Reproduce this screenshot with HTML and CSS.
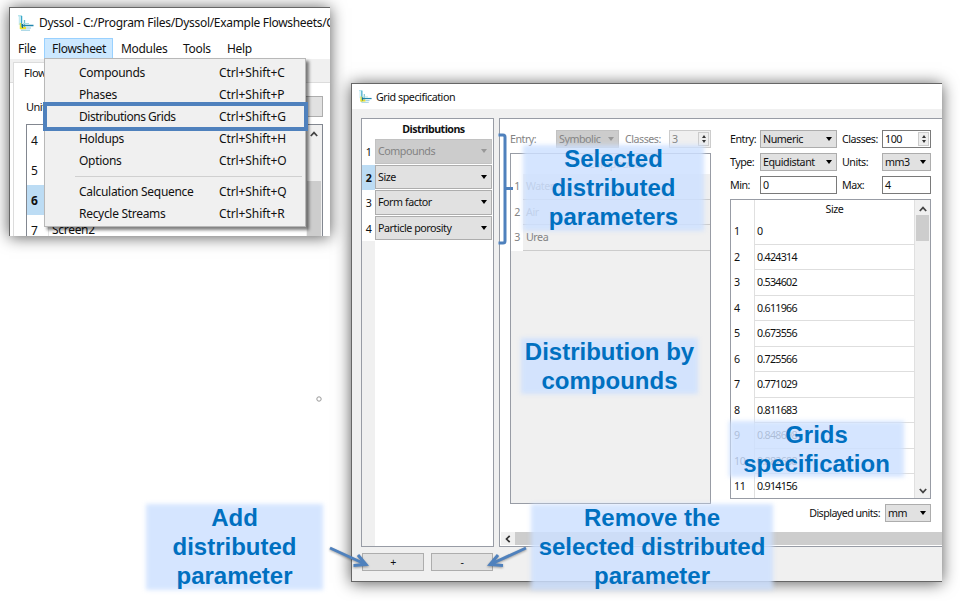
FILE: index.html
```html
<!DOCTYPE html>
<html lang="en">
<head>
<meta charset="utf-8">
<title>Dyssol - Grid specification</title>
<link rel="stylesheet" href="styles.css">
</head>
<body>
<svg width="0" height="0" class="defs">
  <symbol id="logo" viewBox="0 0 16 16">
    <path d="M0 .8h4" stroke="#9adbe6" stroke-width="1"/>
    <path d="M1.300 1v9" stroke="#b5e4ee" stroke-width="1"/>
    <path d="M3.500 1v13" stroke="#3aa9c9" stroke-width="1.500"/>
    <path d="M6.500 5v7" stroke="#6fbfcd" stroke-width="1.300"/>
    <path d="M2.500 8v6" stroke="#e6e23a" stroke-width="1.500"/>
    <path d="M2 13h6" stroke="#efe12a" stroke-width="2.400"/>
    <path d="M4 10.500h11.500" stroke="#2186ad" stroke-width="1.500"/>
    <path d="M5 8.500h6" stroke="#a6dce4" stroke-width="1"/>
    <path d="M8 13h5M3 15.200h9" stroke="#8cc9dc" stroke-width="1"/>
    <path d="M4.500 9v4" stroke="#176b86" stroke-width="1.200"/>
  </symbol>
  <symbol id="up" viewBox="0 0 8 6"><path d="M.8 5 4 1.600 7.200 5" fill="none" stroke="#444" stroke-width="1.700"/></symbol>
  <symbol id="down" viewBox="0 0 8 6"><path d="M.8 1 4 4.400 7.200 1" fill="none" stroke="#444" stroke-width="1.700"/></symbol>
</svg>
<main class="canvas">
  <section class="window app">
    <header class="app-title"><svg class="logo"><use href="#logo"/></svg><span>Dyssol - C:/Program Files/Dyssol/Example Flowsheets/C</span></header>
    <nav class="menubar"><span class="m1">File</span><span class="m2">Flowsheet</span><span class="m3">Modules</span><span class="m4">Tools</span><span class="m5">Help</span></nav>
    <div class="tabs"><div class="tab">Flow</div></div>
    <div class="pane">
      <div class="unit-row"><span>Unit</span><div class="unit-btn"></div></div>
      <div class="units">
        <div class="nums"><span>4</span><span>5</span><span class="on">6</span><span>7</span></div>
        <div class="names"><span>Screen2</span></div>
        <div class="vbar"><svg><use href="#up"/></svg><div class="thumb"></div></div>
      </div>
    </div>
  </section>

  <div class="menu">
    <div class="item"><span>Compounds</span><span>Ctrl+Shift+C</span></div>
    <div class="item"><span>Phases</span><span>Ctrl+Shift+P</span></div>
    <div class="item"><span class="tight">Distributions Grids</span><span>Ctrl+Shift+G</span></div>
    <div class="item"><span>Holdups</span><span>Ctrl+Shift+H</span></div>
    <div class="item"><span>Options</span><span>Ctrl+Shift+O</span></div>
    <div class="sep"></div>
    <div class="item"><span>Calculation Sequence</span><span>Ctrl+Shift+Q</span></div>
    <div class="item"><span>Recycle Streams</span><span>Ctrl+Shift+R</span></div>
  </div>
  <div class="marker"></div>

  <section class="window dialog">
    <header class="dlg-title"><svg class="logo"><use href="#logo"/></svg><span>Grid specification</span></header>
    <div class="dlg-body">
      <div class="left">
        <div class="dist">
          <div class="dist-head">Distributions</div>
          <div class="dist-row"><b class="n">1</b><div class="combo off">Compounds</div></div>
          <div class="dist-row sel"><b class="n">2</b><div class="combo">Size</div></div>
          <div class="dist-row"><b class="n">3</b><div class="combo">Form factor</div></div>
          <div class="dist-row"><b class="n">4</b><div class="combo">Particle porosity</div></div>
          <div class="dist-rest"></div>
        </div>
        <div class="btns"><div class="btn">+</div><div class="btn">-</div></div>
      </div>
      <div class="right">
        <div class="grids">
          <div class="comp">
            <div class="form disabled"><span>Entry:</span><div class="combo off">Symbolic</div><span>Classes:</span><div class="spin">3<i></i></div></div>
            <div class="ctable">
              <div class="chead">Compounds</div>
              <div class="crow"><span>1</span><span>Water</span></div>
              <div class="crow"><span>2</span><span>Air</span></div>
              <div class="crow"><span>3</span><span>Urea</span></div>
            </div>
          </div>
          <div class="num">
            <div class="form"><span>Entry:</span><div class="combo">Numeric</div><span>Classes:</span><div class="spin">100<i></i></div>
              <span>Type:</span><div class="combo">Equidistant</div><span>Units:</span><div class="combo">mm3</div>
              <span>Min:</span><div class="spin">0</div><span>Max:</span><div class="spin">4</div></div>
            <div class="stable">
              <div class="srows">
                <div class="shead"><span></span><span>Size</span></div>
                <div class="srow"><span>1</span><span>0</span></div>
                <div class="srow"><span>2</span><span>0.424314</span></div>
                <div class="srow"><span>3</span><span>0.534602</span></div>
                <div class="srow"><span>4</span><span>0.611966</span></div>
                <div class="srow"><span>5</span><span>0.673556</span></div>
                <div class="srow"><span>6</span><span>0.725566</span></div>
                <div class="srow"><span>7</span><span>0.771029</span></div>
                <div class="srow"><span>8</span><span>0.811683</span></div>
                <div class="srow"><span>9</span><span>0.848698</span></div>
                <div class="srow"><span>10</span><span>0.882688</span></div>
                <div class="srow"><span>11</span><span>0.914156</span></div>
              </div>
              <div class="sbar"><svg><use href="#up"/></svg><div class="thumb"></div><svg class="dn"><use href="#down"/></svg></div>
            </div>
            <div class="disp"><span>Displayed units:</span><div class="combo">mm</div></div>
          </div>
        </div>
        <div class="hbar"><div class="arr"><svg viewBox="0 0 6 8"><path d="M4.700.8 1.500 4l3.200 3.200" fill="none" stroke="#333" stroke-width="1.700"/></svg></div><div class="hthumb"></div></div>
      </div>
    </div>
  </section>

  <div class="note selected">Selected<br>distributed<br>parameters</div>
  <div class="note bycomp">Distribution by<br>compounds</div>
  <div class="note spec">Grids<br>specification</div>
  <div class="note add">Add<br>distributed<br>parameter</div>
  <div class="note remove">Remove the<br>selected distributed<br>parameter</div>
  <svg class="overlay" viewBox="0 0 960 601" fill="none" stroke="#4f81bd" stroke-width="3">
    <path d="M498.500 135h4.500q2 0 2 2v104q0 2-2 2h-4.500M505 188.500h8"/>
    <g class="arrows"><path d="M330 548l35 16M353.500 565.500l12.500-1-8-9.500M526 548l-35 16M503 565.500l-13-1 8-9.500"/></g>
    <circle cx="319" cy="399" r="2.200" stroke="#999" stroke-width="1"/>
  </svg>
</main>
</body>
</html>
```

FILE: styles.css
```css
* { box-sizing: border-box; }
body { margin: 0; background: #fff; overflow: hidden; }
.defs { position: absolute; }
.canvas { position: relative; width: 960px; height: 601px; overflow: hidden; font: 12px/16px "Noto Sans", sans-serif; color: #111; white-space: nowrap; }
.window { position: absolute; box-shadow: 0 1px 15px rgba(0,0,0,.65); border: 1px solid #666; border-right: 0; }
.app { left: 9px; top: 7px; width: 321px; height: 229px; background: #fff; overflow: hidden; border-bottom: 0; letter-spacing: -.3px; }
.logo { width: 16px; height: 16px; flex: none; }
.app-title { height: 30px; display: flex; align-items: center; padding-left: 8px; gap: 5px; letter-spacing: -.31px; }
.menubar { display: flex; height: 21px; line-height: 22px; padding-left: 8px; }
.menubar .m1 { width: 26px; }
.menubar .m2 { width: 69px; padding-left: 7px; border: 1px solid #99d1ff; background: #cce8ff; line-height: 20px; }
.menubar .m3 { width: 70px; padding-left: 8px; }
.menubar .m4 { width: 44px; }
.tabs { height: 24px; background: #f0f0f0; border-bottom: 1px solid #dcdcdc; padding: 3px 0 0 3px; }
.tab { width: 60px; height: 21px; background: #fff; border: 1px solid #dcdcdc; border-bottom: 0; padding-left: 10px; font-size: 11px; line-height: 20px; }
.pane { margin-left: 3px; border-left: 1px solid #dcdcdc; padding: 13px 7px 0 12px; height: 160px; }
.unit-row { display: flex; justify-content: space-between; height: 28px; font-size: 11px; line-height: 21px; letter-spacing: -.5px; }
.unit-btn { width: 60px; height: 21px; background: #e1e1e1; border: 1px solid #adadad; }
.units { display: flex; height: 130px; border: 1px solid #828790; }
.nums { width: 22px; border-right: 1px solid #e5e5e5; display: flex; flex-direction: column; }
.nums span { height: 30px; line-height: 31px; padding-left: 4px; }
.nums .on { background: #bcdcf4; font-weight: bold; }
.names { flex: 1; padding: 90px 0 0 3px; line-height: 30px; }
.vbar { width: 16px; background: #f0f0f0; display: flex; flex-direction: column; align-items: center; }
.vbar svg, .sbar svg { width: 8px; height: 6px; margin-top: 6px; flex: none; }
.vbar .thumb { width: 14px; height: 100px; margin-top: 44px; background: #cdcdcd; }

.menu { position: absolute; left: 44px; top: 58px; width: 262px; height: 169px; background: #f0f0f0; border: 1px solid #b8b8b8; padding: 3px 0; box-shadow: 3px 3px 3px rgba(0,0,0,.5); letter-spacing: -.3px; }
.item { display: grid; grid-template-columns: 140px 1fr; height: 22px; line-height: 22px; padding-left: 34px; }
.item span + span { letter-spacing: -.1px; }
.item .tight { letter-spacing: -.48px; }
.sep { height: 1px; margin: 4px 3px 4px 30px; background: #d0d0d0; }
.marker { position: absolute; left: 43px; top: 102px; width: 265px; height: 29px; border: 4px solid #4f81bd; }

.dialog { left: 351px; top: 83px; width: 591px; height: 499px; background: #f0f0f0; font-size: 10.700px; letter-spacing: -.45px; }
.dlg-title { height: 25px; background: #fff; display: flex; align-items: center; gap: 4px; padding-left: 7px; letter-spacing: -.45px; }
.dlg-title .logo { width: 13px; height: 13px; }
.dlg-body { display: flex; gap: 5px; padding: 9px 0 0 9px; }
.left { width: 133px; }
.dist { height: 429px; border: 1px solid #989ca5; background: #fff; display: flex; flex-direction: column; }
.dist-head { height: 20px; line-height: 20px; font-weight: bold; text-align: center; padding-left: 12px; letter-spacing: -.55px; }
.dist-row { display: flex; height: 25.500px; flex: none; }
.n { width: 13px; line-height: 26px; text-align: center; font-weight: normal; }
.sel .n { background: #bcdcf4; font-weight: bold; }
.combo { border: 1px solid #adadad; background: #e1e1e1; padding-left: 2px; display: flex; align-items: center; position: relative; }
.combo::after { content: ""; margin-left: auto; margin-right: 4px; border: 3.500px solid transparent; border-top: 4px solid #000; border-bottom: 0; }
.combo.off { background: #ccc; border-color: #c2c2c2; color: #838383; }
.combo.off::after { border-top-color: #989898; }
.dist-row .combo { width: 117px; height: 24.500px; }
.dist-rest { width: 13px; flex: 1; background: #f0f0f0; }
.btns { display: flex; gap: 7px; margin-top: 6px; padding-left: 1px; }
.btn { width: 62px; height: 18px; border: 1px solid #adadad; background: #e1e1e1; text-align: center; line-height: 17px; }
.right { width: 443px; height: 429px; border: 1px solid #989ca5; border-right: 0; background: #fff; }
.grids { height: 413px; padding: 11px 0 0 10px; display: flex; gap: 19px; }
.form { display: grid; grid-template-columns: 30px 77px 40px 49px; column-gap: 0; row-gap: 5px; grid-auto-rows: 18px; line-height: 18px; }
.num .form { grid-template-columns: 30px 77px 45px 49px; }
.num .form span:nth-of-type(even) { padding-left: 5px; }
.form.disabled { grid-template-columns: 46px 63px 50px 42px; color: #838383; }
.form.disabled span:nth-of-type(2) { padding-left: 6px; }
.spin { border: 1px solid #7a7a7a; background: #fff; padding-left: 2px; line-height: 16px; display: flex; justify-content: space-between; }
.disabled .spin { border-color: #ccc; background: #f0f0f0; }
.spin i { width: 11px; margin: 1px; background: #eee; border: 1px solid #ccc; display: flex; flex-direction: column; align-items: center; justify-content: space-between; padding: 2px 0; }
.spin i::before, .spin i::after { content: ""; border: 2.500px solid transparent; }
.spin i::before { border-bottom: 3px solid #333; border-top: 0; }
.spin i::after { border-top: 3px solid #333; border-bottom: 0; }
.comp, .num { width: 201px; }
.form > span { letter-spacing: -.5px; }
.ctable { height: 351px; margin-top: 5px; border: 1px solid #989ca5; background: #f0f0f0; color: #838383; }
.chead { height: 20px; line-height: 20px; background: #fff; text-align: center; padding-left: 12px; }
.crow { display: flex; height: 25.500px; line-height: 25px; }
.crow span:first-child { width: 12px; background: #fff; text-align: center; }
.crow span:last-child { flex: 1; padding-left: 3px; border-bottom: 1px solid #ccc; }
.stable { height: 300px; margin-top: 5px; border: 1px solid #989ca5; display: flex; overflow: hidden; }
.srows { flex: 1; }
.shead, .srow { display: grid; grid-template-columns: 23px 1fr; height: 25.500px; line-height: 25px; }
.shead { height: 19px; line-height: 19px; text-align: center; }
.shead span + span, .srow span + span { border-left: 1px solid #e0e0e0; border-right: 1px solid #e0e0e0; }
.srow span + span { border-bottom: 1px solid #dedede; padding-left: 2px; line-height: 24px; letter-spacing: -.73px; }
.srow span:first-child { padding-left: 3px; }
.sbar { width: 15px; background: #f0f0f0; display: flex; flex-direction: column; align-items: center; }
.sbar .thumb { width: 13px; height: 26px; margin-top: 3px; background: #cdcdcd; }
.sbar .dn { margin: auto 0 4px; }
.disp { display: flex; justify-content: flex-end; gap: 5px; height: 18px; line-height: 18px; margin-top: 5px; letter-spacing: -.55px; }
.disp .combo { width: 46px; }
.hbar { display: flex; height: 13px; padding-left: 1px; }
.arr { width: 14px; background: #f0f0f0; display: grid; place-items: center; }
.arr svg { width: 6px; height: 8px; }
.hthumb { flex: 1; background: #cdcdcd; }

.note { position: absolute; z-index: 1; color: #0070c0; font: bold 24px/29px "Liberation Sans", Arial, sans-serif; text-align: center; }
.note::before { content: ""; position: absolute; z-index: -1; inset: 1px 0 -1px 0; background: rgba(204,224,255,.83); filter: blur(2px); }
.selected { left: 523px; top: 144px; width: 181px; height: 86px; }
.bycomp { left: 521px; top: 337px; width: 177px; height: 56px; }
.spec { left: 729px; top: 420px; width: 175px; height: 56px; }
.add { left: 146px; top: 503px; width: 177px; height: 86px; }
.remove { left: 531px; top: 503px; width: 242px; height: 86px; }
.overlay { position: absolute; left: 0; top: 0; width: 960px; height: 601px; z-index: 2; }
.arrows { filter: drop-shadow(0 1px 1px rgba(0,0,0,.35)); }
```
